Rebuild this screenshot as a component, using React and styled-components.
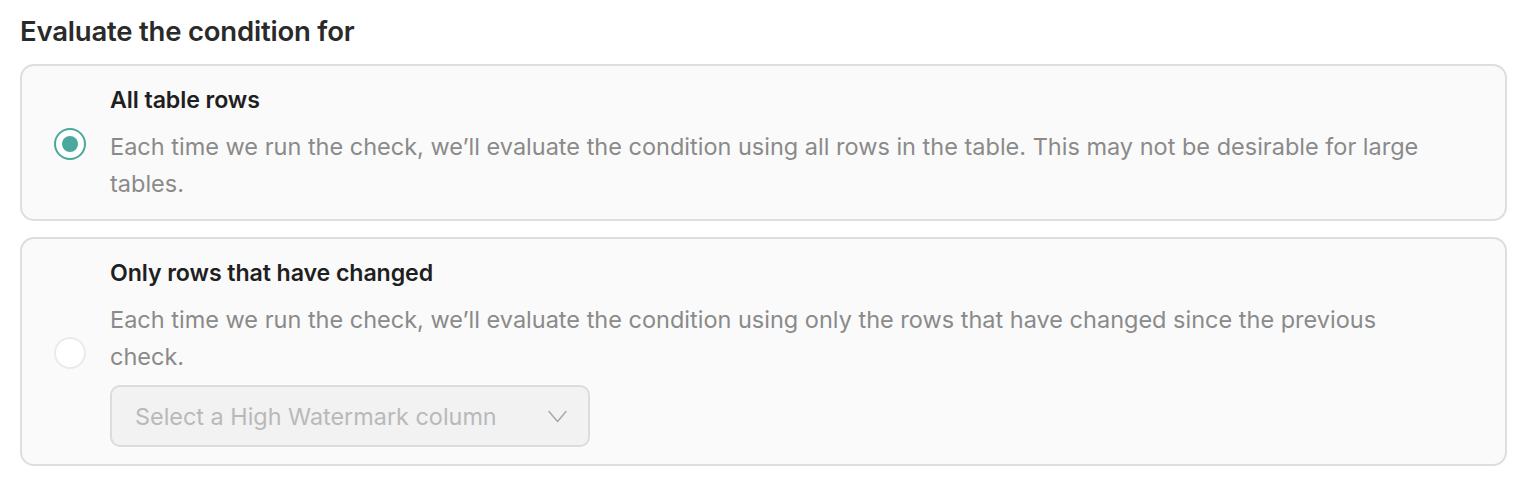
import styled, { createGlobalStyle } from "styled-components";

const GlobalStyle = createGlobalStyle`
  body {
    margin: 0;
    background: #ffffff;
    font-family: Inter, "Noto Sans", sans-serif;
  }
`;

const Page = styled.div`
  padding: 12px 15px 0 20px;
`;

const Heading = styled.h2`
  margin: 0 0 14px;
  font-size: 27.5px;
  font-weight: 600;
  color: #2a2a2a;
  letter-spacing: -0.2px;
  line-height: 38px;
`;

const Options = styled.div`
  display: flex;
  flex-direction: column;
  gap: 16px;
`;

const Card = styled.label`
  display: flex;
  align-items: center;
  gap: 24px;
  padding: 20px 60px 17px 32px;
  background: #fafafa;
  border: 2px solid #dedede;
  border-radius: 14px;
  cursor: pointer;
`;

const Radio = styled.span`
  flex: none;
  width: 32px;
  height: 32px;
  box-sizing: border-box;
  border-radius: 50%;
  background: #ffffff;
  border: ${(p) => (p.$checked ? "2.5px solid #4aa89c" : "2px solid #eaeaea")};
  display: flex;
  align-items: center;
  justify-content: center;

  &::after {
    content: "";
    display: ${(p) => (p.$checked ? "block" : "none")};
    width: 16px;
    height: 16px;
    border-radius: 50%;
    background: #4aa89c;
  }
`;

const Body = styled.div`
  display: flex;
  flex-direction: column;
  min-width: 0;
`;

const Title = styled.div`
  font-size: 23.2px;
  font-weight: 600;
  color: #1f1f1f;
  letter-spacing: -0.1px;
  line-height: 28px;
  margin-bottom: 14px;
`;

const Description = styled.div`
  font-size: 23.5px;
  color: #8a8a8a;
  line-height: 37px;
`;

const Select = styled.div`
  margin-top: 10px;
  width: 480px;
  height: 62px;
  box-sizing: border-box;
  display: flex;
  align-items: center;
  justify-content: space-between;
  padding: 0 21px 0 23px;
  background: #f2f2f2;
  border: 2px solid #dcdcdc;
  border-radius: 10px;
  color: #b9b9b9;
  font-size: 23.4px;
`;

const Chevron = () => (
  <svg width="19" height="13" viewBox="0 0 19 13" fill="none" stroke="#a8a8a8" strokeWidth="1.5" strokeLinecap="round" strokeLinejoin="round">
    <path d="M1 1.5l8.5 10 8.5-10" />
  </svg>
);

export default function App() {
  return (
    <>
      <GlobalStyle />
      <Page>
        <Heading>Evaluate the condition for</Heading>
        <Options>
          <Card>
            <Radio $checked />
            <Body>
              <Title>All table rows</Title>
              <Description>
                Each time we run the check, we’ll evaluate the condition using all rows in the table. This may not be desirable for large tables.
              </Description>
            </Body>
          </Card>
          <Card>
            <Radio />
            <Body>
              <Title>Only rows that have changed</Title>
              <Description>
                Each time we run the check, we’ll evaluate the condition using only the rows that have changed since the previous check.
              </Description>
              <Select>
                <span>Select a High Watermark column</span>
                <Chevron />
              </Select>
            </Body>
          </Card>
        </Options>
      </Page>
    </>
  );
}
